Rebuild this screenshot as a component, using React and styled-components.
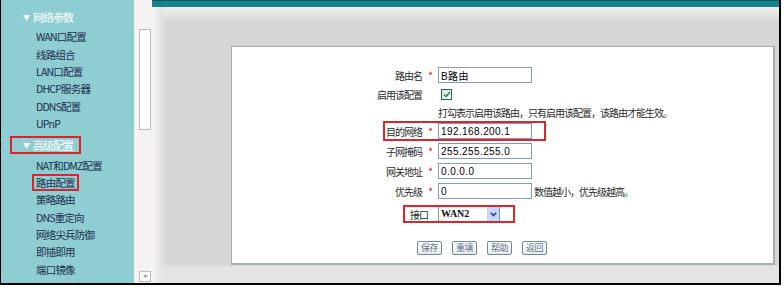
import React from "react";
import styled, { createGlobalStyle } from "styled-components";

const Global = createGlobalStyle`
  html, body { margin: 0; padding: 0; background: #fff; }
  body { font-family: "Noto Sans CJK SC", "Noto Sans", sans-serif; }
`;

const Frame = styled.div`
  display: flex;
  width: 778px;
  height: 283px;
  border-left: 1px solid #000;
  border-right: 2px solid #000;
  border-bottom: 2px solid #000;
`;

const Sidebar = styled.div`
  width: 133px;
  background: #8ecdd2;
  padding-top: 8px;
  box-sizing: border-box;
  display: flex;
  flex-direction: column;
`;

const Group = styled.div`
  height: 18px;
  display: flex;
  align-items: center;
  margin: ${(p) => p.$mt || 0}px 0 2px;
`;

const GroupTag = styled.span`
  margin-left: 9px;
  padding: 0 6px 0 11px;
  height: 14px;
  border: 2px solid ${(p) => (p.$marked ? "#d8262b" : "transparent")};
  display: flex;
  align-items: center;
  color: #fff;
  font-size: 11px;
  letter-spacing: -1px;
  i {
    font-style: normal;
    font-size: 7px;
    margin-right: 4px;
  }
`;

const Item = styled.div`
  height: 17.4px;
  display: flex;
  align-items: center;
`;

const ItemTag = styled.span`
  margin-left: 31px;
  padding: 0 2px;
  height: 13px;
  display: flex;
  align-items: center;
  border: 2px solid ${(p) => (p.$marked ? "#d8262b" : "transparent")};
  color: #1d2c4c;
  font-size: 10.5px;
  letter-spacing: -0.8px;
`;

const Track = styled.div`
  width: 18px;
  background: #f5f2f2;
  display: flex;
  flex-direction: column;
  padding: 29px 0 1px 5px;
  box-sizing: border-box;
`;

const Thumb = styled.div`
  width: 12px;
  height: 101px;
  box-sizing: border-box;
  background: #fff;
  border: 1px solid #bdbdbd;
`;

const ArrowBtn = styled.div`
  margin-top: auto;
  width: 12px;
  height: 11px;
  box-sizing: border-box;
  background: #fafafa;
  border: 1px solid #bcbcbc;
  display: flex;
  align-items: center;
  justify-content: center;
`;

const Main = styled.div`
  flex: 1;
  display: flex;
  flex-direction: column;
`;

const TopBar = styled.div`
  height: 7px;
  background: #16828c;
  border-top: 1px solid #0b5e66;
  box-sizing: border-box;
`;

const Content = styled.div`
  flex: 1;
  padding: 39px 4px 0 79px;
  box-sizing: border-box;
  background:
    linear-gradient(to right, #f6f3f3 0, #e6e5e5 8px, rgba(214, 214, 214, 0) 14px),
    linear-gradient(to bottom, #f4eeee 0, #e9e6e6 6px, #d6d6d6 15px, #d6d6d6 257px, #e4e4e4 260px);
`;

const Panel = styled.div`
  height: 219px;
  box-sizing: border-box;
  background: #fff;
  border: 1px solid #a4aeb1;
  border-right-width: 2px;
  border-bottom-width: 2px;
  padding-top: 18px;
  display: flex;
  flex-direction: column;
`;

const Row = styled.div`
  position: relative;
  display: flex;
  align-items: center;
  height: ${(p) => p.$h || 20}px;
  margin-top: ${(p) => p.$mt || 0}px;
  font-size: 10px;
  letter-spacing: -1px;
  color: #2b2b2b;
`;

const Label = styled.div`
  width: ${(p) => p.$w || 190}px;
  padding-right: ${(p) => p.$pr || 0}px;
  box-sizing: border-box;
  text-align: right;
  white-space: nowrap;
`;

const Star = styled.span`
  width: 16px;
  text-align: center;
  color: #e02424;
  font-size: 11px;
`;

const Input = styled.div`
  width: 94px;
  height: 16px;
  box-sizing: border-box;
  border: 1px solid #7f9db9;
  padding: 0 2px;
  display: flex;
  align-items: center;
  font-family: "Liberation Sans", "Noto Sans CJK SC", sans-serif;
  font-size: 10px;
  letter-spacing: 0.4px;
  color: #000;
`;

const Hint = styled.span`
  margin-left: ${(p) => p.$ml || 0}px;
  white-space: nowrap;
`;

const Check = styled.span`
  margin-left: 19px;
  width: 11px;
  height: 11px;
  box-sizing: border-box;
  border: 1px solid #1d5a8a;
  background: linear-gradient(135deg, #e4e4de, #fbfbf8);
  display: flex;
  align-items: center;
  justify-content: center;
`;

const Select = styled.div`
  width: 62px;
  height: 16px;
  box-sizing: border-box;
  border: 1px solid #7f9db9;
  display: flex;
`;

const SelectText = styled.span`
  flex: 1;
  padding-left: 2px;
  font-family: "Liberation Serif", serif;
  font-weight: bold;
  font-size: 10px;
  letter-spacing: 0;
  line-height: 14px;
  color: #111;
`;

const SelectArrow = styled.span`
  width: 12px;
  background: #c6d7fb;
  display: flex;
  align-items: center;
  justify-content: center;
`;

const Mark = styled.div`
  position: absolute;
  left: ${(p) => p.$x}px;
  top: ${(p) => p.$y}px;
  width: ${(p) => p.$w}px;
  height: ${(p) => p.$h}px;
  box-sizing: border-box;
  border: 2px solid #d8262b;
  pointer-events: none;
`;

const Buttons = styled.div`
  display: flex;
  gap: 10px;
  margin: 17px 0 0 185px;
`;

const Btn = styled.button`
  width: 25px;
  height: 14px;
  padding: 0;
  box-sizing: border-box;
  border: 1px solid #6f8797;
  border-radius: 2px;
  background: linear-gradient(#ffffff, #e6eaee);
  color: #5b7388;
  font-family: "Noto Sans CJK SC", sans-serif;
  font-size: 9px;
  letter-spacing: -0.5px;
  line-height: 12px;
`;

const netItems = ["WAN口配置", "线路组合", "LAN口配置", "DHCP服务器", "DDNS配置", "UPnP"];
const advItems = ["NAT和DMZ配置", "路由配置", "策略路由", "DNS重定向", "网络尖兵防御", "即插即用", "端口镜像"];

export default function App() {
  return (
    <>
      <Global />
      <Frame>
        <Sidebar>
          <Group>
            <GroupTag><i>▼</i>网络参数</GroupTag>
          </Group>
          {netItems.map((t) => (
            <Item key={t}><ItemTag>{t}</ItemTag></Item>
          ))}
          <Group $mt={4}>
            <GroupTag $marked><i>▼</i>高级配置</GroupTag>
          </Group>
          {advItems.map((t) => (
            <Item key={t}><ItemTag $marked={t === "路由配置"}>{t}</ItemTag></Item>
          ))}
        </Sidebar>
        <Track>
          <Thumb />
          <ArrowBtn>
            <svg width="5" height="3" viewBox="0 0 5 3"><path d="M0 0h5L2.5 3z" fill="#9a9a9a" /></svg>
          </ArrowBtn>
        </Track>
        <Main>
          <TopBar />
          <Content>
            <Panel>
              <Row>
                <Label>路由名</Label><Star>*</Star>
                <Input>B路由</Input>
              </Row>
              <Row $h={18}>
                <Label>启用该配置</Label>
                <Check>
                  <svg width="8" height="7" viewBox="0 0 8 7">
                    <path d="M1 3.5l2 2L7 1" stroke="#1f9a2e" strokeWidth="1.6" fill="none" />
                  </svg>
                </Check>
              </Row>
              <Row $h={18}>
                <Hint $ml={206}>打勾表示启用该路由，只有启用该配置，该路由才能生效。</Hint>
              </Row>
              <Row>
                <Label>目的网络</Label><Star>*</Star>
                <Input>192.168.200.1</Input>
                <Mark $x={151} $y={0} $w={163} $h={20} />
              </Row>
              <Row>
                <Label>子网掩码</Label><Star>*</Star>
                <Input>255.255.255.0</Input>
              </Row>
              <Row>
                <Label>网关地址</Label><Star>*</Star>
                <Input>0.0.0.0</Input>
              </Row>
              <Row>
                <Label>优先级</Label><Star>*</Star>
                <Input>0</Input>
                <Hint $ml={2}>数值越小，优先级越高。</Hint>
              </Row>
              <Row $mt={3}>
                <Label $w={206} $pr={10}>接口</Label>
                <Select>
                  <SelectText>WAN2</SelectText>
                  <SelectArrow>
                    <svg width="7" height="5" viewBox="0 0 7 5">
                      <path d="M0.8 0.8L3.5 3.6L6.2 0.8" stroke="#1e3f8c" strokeWidth="1.5" fill="none" />
                    </svg>
                  </SelectArrow>
                </Select>
                <Mark $x={171} $y={1} $w={112} $h={18} />
              </Row>
              <Buttons>
                <Btn>保存</Btn>
                <Btn>重填</Btn>
                <Btn>帮助</Btn>
                <Btn>返回</Btn>
              </Buttons>
            </Panel>
          </Content>
        </Main>
      </Frame>
    </>
  );
}
